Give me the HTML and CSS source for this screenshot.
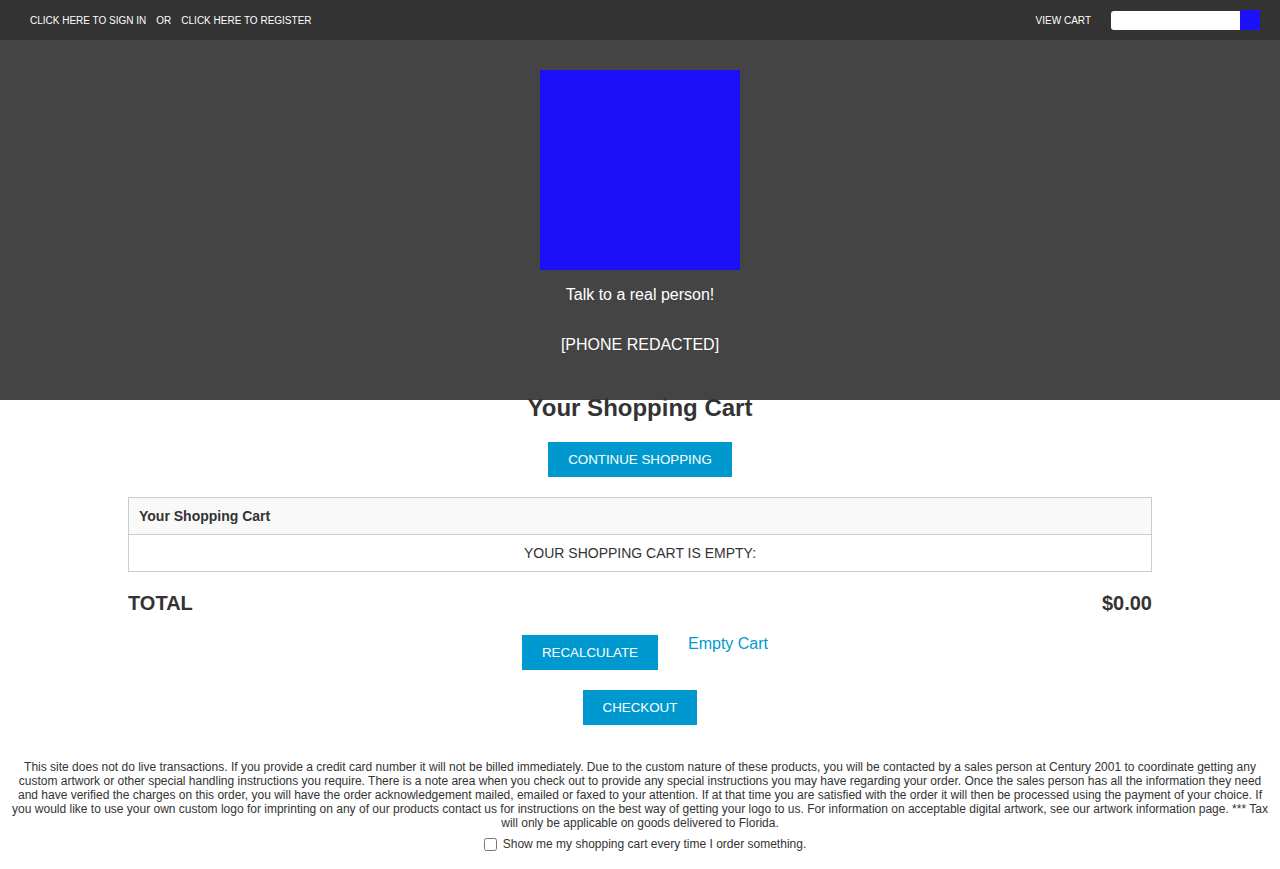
FILE: index.html
```html
<!DOCTYPE html>
<html lang="en">
<head>
<meta charset="utf-8">
<meta name="viewport" content="width=device-width, initial-scale=1">
<title>Your Shopping Cart</title>
<link rel="stylesheet" href="styles.css">
</head>
<body>
<div class="topbar">
  <nav class="account">
    <a href="#">Click here to sign in</a>
    <span>or</span>
    <a href="#">Click here to register</a>
  </nav>
  <div class="tools">
    <a href="#">View Cart</a>
    <form class="search">
      <input class="search-input" type="text" aria-label="Search">
      <button class="search-button" type="button" aria-label="Go"></button>
    </form>
  </div>
</div>
<header class="hero">
  <div class="logo"></div>
  <p>Talk to a real person!</p>
  <p>[PHONE REDACTED]</p>
</header>
<main class="cart">
  <h1 class="title">Your Shopping Cart</h1>
  <button class="btn" type="button">Continue Shopping</button>
  <table class="items">
    <thead><tr><th>Your Shopping Cart</th></tr></thead>
    <tbody><tr><td>YOUR SHOPPING CART IS EMPTY:</td></tr></tbody>
  </table>
  <div class="total"><span>TOTAL</span><span>$0.00</span></div>
  <div class="actions">
    <button class="btn" type="button">Recalculate</button>
    <a class="empty" href="#">Empty Cart</a>
  </div>
  <button class="btn" type="button">Checkout</button>
</main>
<footer class="notes">
  <p>This site does not do live transactions. If you provide a credit card number it will not be billed immediately. Due to the custom nature of these products, you will be contacted by a sales person at Century 2001 to coordinate getting any custom artwork or other special handling instructions you require. There is a note area when you check out to provide any special instructions you may have regarding your order. Once the sales person has all the information they need and have verified the charges on this order, you will have the order acknowledgement mailed, emailed or faxed to your attention. If at that time you are satisfied with the order it will then be processed using the payment of your choice. If you would like to use your own custom logo for imprinting on any of our products contact us for instructions on the best way of getting your logo to us. For information on acceptable digital artwork, see our artwork information page. *** Tax will only be applicable on goods delivered to Florida.</p>
  <label class="remember"><input class="check" type="checkbox">Show me my shopping cart every time I order something.</label>
</footer>
</body>
</html>
```
FILE: styles.css
```css
* {
  box-sizing: border-box;
}

body {
  margin: 0;
  background: #fff;
  color: #333;
  font-family: "Liberation Sans", Arial, sans-serif;
  font-size: 16px;
}

p,
h1 {
  margin: 0;
}

a {
  color: inherit;
  text-decoration: none;
}

.topbar {
  display: flex;
  justify-content: space-between;
  align-items: center;
  height: 40px;
  padding: 0 20px 0 30px;
  background: #333;
  color: #fff;
  font-size: 10px;
  text-transform: uppercase;
}

.account {
  display: flex;
  gap: 10px;
}

.tools {
  display: flex;
  align-items: center;
  gap: 20px;
}

.search {
  display: flex;
  align-items: center;
}

.search-input {
  width: 129px;
  height: 19px;
  padding: 0 5px;
  border: 0;
  border-radius: 3px 0 0 3px;
  background: #fff;
}

.search-button {
  width: 20px;
  height: 20px;
  padding: 0;
  border: 0;
  background: #1c10f8;
}

.hero {
  display: flex;
  flex-direction: column;
  align-items: center;
  padding: 30px 20px;
  background: #444;
  color: #fff;
  text-align: center;
  line-height: 50px;
}

.logo {
  width: 200px;
  height: 200px;
  background: #1c10f8;
}

/* The heading overlaps the bottom edge of the hero. */
.cart {
  display: flex;
  flex-direction: column;
  align-items: center;
  width: 80%;
  margin: -6px auto 0;
}

.title {
  margin-bottom: 20px;
  font-size: 24px;
  line-height: 28px;
}

.btn {
  height: 35px;
  padding: 0 20px;
  border: 0;
  background: #0099cf;
  color: #fff;
  font-family: inherit;
  text-transform: uppercase;
}

.items {
  width: 100%;
  margin: 20px 0;
  border-collapse: collapse;
  font-size: 14px;
  line-height: 16px;
}

.items th,
.items td {
  padding: 10px;
  border: 1px solid #ccc;
}

.items th {
  background: #f9f9f9;
  text-align: left;
}

.items td {
  text-align: center;
}

.total {
  display: flex;
  justify-content: space-between;
  width: 100%;
  margin-bottom: 20px;
  font-size: 20px;
  font-weight: bold;
  line-height: 23px;
}

.actions {
  display: flex;
  gap: 30px;
  margin-bottom: 20px;
  padding-left: 10px;
}

.empty {
  color: #0099cf;
  line-height: 18px;
}

.notes {
  padding: 35px 10px 18px;
  font-size: 12px;
  line-height: 14px;
  text-align: center;
}

.remember {
  display: flex;
  justify-content: center;
  align-items: center;
  gap: 6px;
  margin-top: 7px;
  padding-left: 10px;
}

.check {
  width: 13px;
  height: 13px;
  margin: 0;
}
```
